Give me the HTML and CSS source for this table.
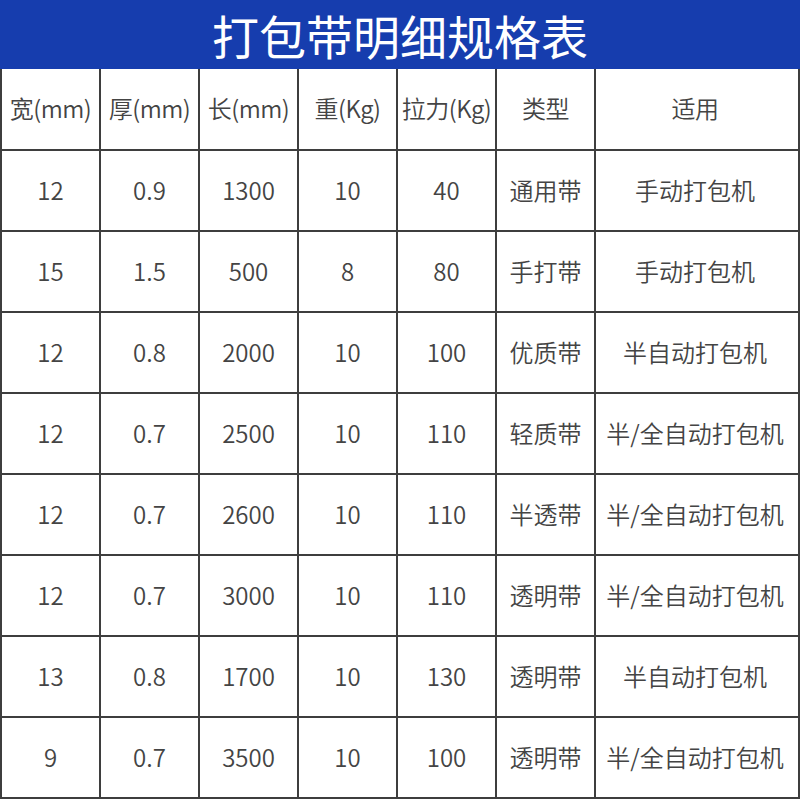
FILE: index.html
```html
<!DOCTYPE html>
<html lang="zh">
<head>
<meta charset="utf-8">
<title>打包带明细规格表</title>
<link rel="stylesheet" href="styles.css">
</head>
<body>
<div class="page">
  <div class="title">打包带明细规格表</div>
  <div class="grid">
    <div class="cell head">宽(mm)</div><div class="cell head">厚(mm)</div><div class="cell head">长(mm)</div><div class="cell head">重(Kg)</div><div class="cell head">拉力(Kg)</div><div class="cell head">类型</div><div class="cell head last">适用</div>

    <div class="cell">12</div><div class="cell">0.9</div><div class="cell">1300</div><div class="cell">10</div><div class="cell">40</div><div class="cell">通用带</div><div class="cell last">手动打包机</div>

    <div class="cell">15</div><div class="cell">1.5</div><div class="cell">500</div><div class="cell">8</div><div class="cell">80</div><div class="cell">手打带</div><div class="cell last">手动打包机</div>

    <div class="cell">12</div><div class="cell">0.8</div><div class="cell">2000</div><div class="cell">10</div><div class="cell">100</div><div class="cell">优质带</div><div class="cell last">半自动打包机</div>

    <div class="cell">12</div><div class="cell">0.7</div><div class="cell">2500</div><div class="cell">10</div><div class="cell">110</div><div class="cell">轻质带</div><div class="cell last">半/全自动打包机</div>

    <div class="cell">12</div><div class="cell">0.7</div><div class="cell">2600</div><div class="cell">10</div><div class="cell">110</div><div class="cell">半透带</div><div class="cell last">半/全自动打包机</div>

    <div class="cell">12</div><div class="cell">0.7</div><div class="cell">3000</div><div class="cell">10</div><div class="cell">110</div><div class="cell">透明带</div><div class="cell last">半/全自动打包机</div>

    <div class="cell">13</div><div class="cell">0.8</div><div class="cell">1700</div><div class="cell">10</div><div class="cell">130</div><div class="cell">透明带</div><div class="cell last">半自动打包机</div>

    <div class="cell">9</div><div class="cell">0.7</div><div class="cell">3500</div><div class="cell">10</div><div class="cell">100</div><div class="cell">透明带</div><div class="cell last">半/全自动打包机</div>
  </div>
</div>
</body>
</html>
```

FILE: styles.css
```css
html, body {
  margin: 0;
  padding: 0;
  background: #ffffff;
}
.page {
  width: 800px;
  height: 800px;
  overflow: hidden;
  font-family: "Noto Sans CJK SC", "Noto Sans", sans-serif;
}
.title {
  height: 69px;
  background: #163dae;
  color: #ffffff;
  font-size: 47px;
  font-weight: 400;
  line-height: 69px;
  text-align: center;
}
.grid {
  display: grid;
  grid-template-columns: 99px 99px 99px 99px 99px 99px 206px;
  grid-template-rows: 82px repeat(8, 81px);
}
.cell {
  border-left: 2px solid #3e3e3e;
  border-bottom: 2px solid #3e3e3e;
  display: flex;
  align-items: center;
  justify-content: center;
  padding-bottom: 3px;
  font-size: 24px;
  color: #444444;
  white-space: nowrap;
  box-sizing: border-box;
  font-weight: 350;
}
.cell.last {
  border-right: 2px solid #3e3e3e;
  padding-right: 4px;
}
.cell.head {
  letter-spacing: -0.5px;
}
```
